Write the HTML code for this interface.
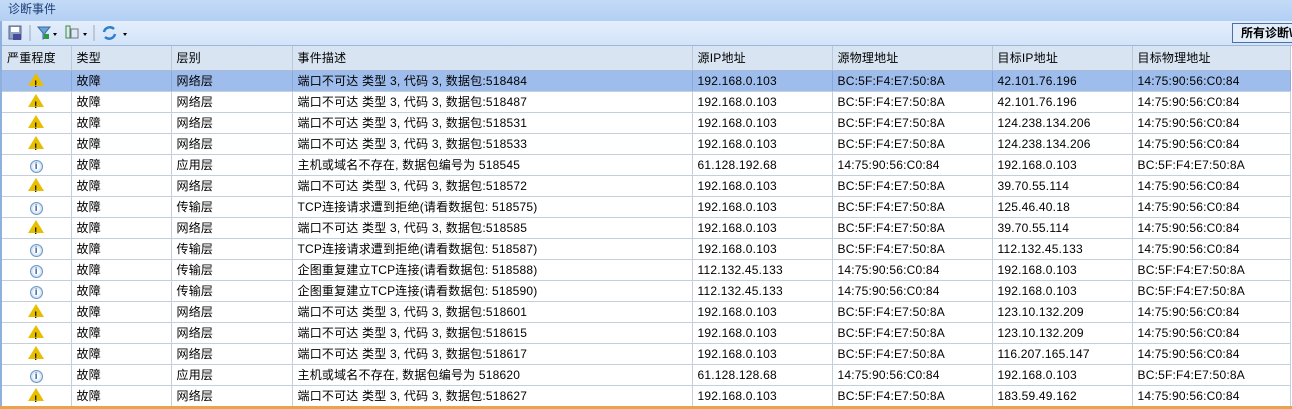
<!DOCTYPE html><html><head><meta charset="utf-8"><style>
body{margin:0;width:1292px;height:409px;overflow:hidden;background:#fff;font-family:"Liberation Sans","Noto Sans CJK SC",sans-serif;font-size:12px;color:#000;position:relative}
.title{position:absolute;left:0;top:0;width:1292px;height:21px;background:linear-gradient(#c4dbf7,#b2cff4);color:#1e3f78;line-height:18px;padding-left:8px;box-sizing:border-box;font-size:12px}
.tb{position:absolute;left:0;top:21px;width:1292px;height:25px;background:linear-gradient(#e4eefb,#d3e3f8);border-bottom:1px solid #9ab7de;box-sizing:border-box}
.btn{position:absolute;left:1232px;top:23px;width:70px;height:20px;border:1px solid #4b6fa8;background:#e3edf9;font-weight:bold;line-height:19px;padding-left:8px;box-sizing:border-box;white-space:nowrap;overflow:hidden}
table{position:absolute;left:2px;top:46px;border-collapse:collapse;table-layout:fixed}
td,th{box-sizing:border-box;height:21px;line-height:19px;border-right:1px solid #c5cfdc;border-bottom:1px solid #c5cfdc;padding:1px 0 0 5px;white-space:nowrap;overflow:hidden;font-weight:normal;text-align:left;letter-spacing:0.2px}
th{height:24px;line-height:22px;background:#d8e4f2;border-right:1px solid #b9c8db;border-bottom:1px solid #a8bcd6}
tr.sel td{background:#9ebdec;border-right-color:#86a8dc}
td.i{text-align:center;padding:0}
.w{display:inline-block;width:0;height:0;border-left:8px solid transparent;border-right:8px solid transparent;border-bottom:13px solid #e8bf00;position:relative;vertical-align:-2px}
.w:after{content:"!";position:absolute;left:-2px;top:2px;font-size:9px;font-weight:bold;color:#000}
.n{display:inline-block;width:11px;height:11px;border-radius:50%;background:radial-gradient(#fff 30%,#9cc4e8);border:1px solid #6d96c4;position:relative;vertical-align:-1px;font-size:9px;line-height:11px;color:#1a4d94;font-weight:bold}
.left{position:absolute;left:0;top:21px;width:2px;height:388px;background:#8fb0dc}
.bot{position:absolute;left:0;top:406px;width:1292px;height:3px;background:#e9a34c}
</style></head><body>
<div class="title">诊断事件</div>
<div class="tb">
<svg width="240" height="24" style="position:absolute;left:0;top:0">
<rect x="9" y="5" width="12" height="13" fill="#8fa3c4" stroke="#55648a"/><rect x="11" y="6" width="8" height="5" fill="#fff"/><rect x="13" y="13" width="8" height="6" fill="#4a4a9a"/>
<line x1="30" y1="4" x2="30" y2="20" stroke="#9ab"/>
<path d="M38 6h12l-5 6v5l-2 1v-6z" fill="#6aa3d6" stroke="#3a6aa0"/><rect x="44" y="13" width="5" height="5" fill="#2d9a3c"/><path d="M53 12h4l-2 3z" fill="#000"/>
<rect x="66" y="5" width="4" height="12" fill="none" stroke="#3a8a3a"/><rect x="71" y="8" width="7" height="9" fill="none" stroke="#777"/><path d="M83 12h4l-2 3z" fill="#000"/>
<line x1="94" y1="4" x2="94" y2="20" stroke="#9ab"/>
<path d="M104 11a6 6 0 0 1 10-3M115 13a6 6 0 0 1-10 3" fill="none" stroke="#2d7fd0" stroke-width="2.5"/><path d="M123 12h4l-2 3z" fill="#000"/>
</svg></div>
<div class="btn">所有诊断\</div>
<div class="left"></div>
<table>
<colgroup><col style="width:69px"><col style="width:100px"><col style="width:121px"><col style="width:400px"><col style="width:140px"><col style="width:160px"><col style="width:140px"><col style="width:158px"></colgroup>
<tr><th>严重程度</th><th>类型</th><th>层别</th><th>事件描述</th><th>源IP地址</th><th>源物理地址</th><th>目标IP地址</th><th>目标物理地址</th></tr>
<tr class="sel"><td class="i"><span class="w"></span></td><td>故障</td><td>网络层</td><td>端口不可达 类型 3, 代码 3, 数据包:518484</td><td>192.168.0.103</td><td>BC:5F:F4:E7:50:8A</td><td>42.101.76.196</td><td>14:75:90:56:C0:84</td></tr>
<tr><td class="i"><span class="w"></span></td><td>故障</td><td>网络层</td><td>端口不可达 类型 3, 代码 3, 数据包:518487</td><td>192.168.0.103</td><td>BC:5F:F4:E7:50:8A</td><td>42.101.76.196</td><td>14:75:90:56:C0:84</td></tr>
<tr><td class="i"><span class="w"></span></td><td>故障</td><td>网络层</td><td>端口不可达 类型 3, 代码 3, 数据包:518531</td><td>192.168.0.103</td><td>BC:5F:F4:E7:50:8A</td><td>124.238.134.206</td><td>14:75:90:56:C0:84</td></tr>
<tr><td class="i"><span class="w"></span></td><td>故障</td><td>网络层</td><td>端口不可达 类型 3, 代码 3, 数据包:518533</td><td>192.168.0.103</td><td>BC:5F:F4:E7:50:8A</td><td>124.238.134.206</td><td>14:75:90:56:C0:84</td></tr>
<tr><td class="i"><span class="n">i</span></td><td>故障</td><td>应用层</td><td>主机或域名不存在, 数据包编号为 518545</td><td>61.128.192.68</td><td>14:75:90:56:C0:84</td><td>192.168.0.103</td><td>BC:5F:F4:E7:50:8A</td></tr>
<tr><td class="i"><span class="w"></span></td><td>故障</td><td>网络层</td><td>端口不可达 类型 3, 代码 3, 数据包:518572</td><td>192.168.0.103</td><td>BC:5F:F4:E7:50:8A</td><td>39.70.55.114</td><td>14:75:90:56:C0:84</td></tr>
<tr><td class="i"><span class="n">i</span></td><td>故障</td><td>传输层</td><td>TCP连接请求遭到拒绝(请看数据包: 518575)</td><td>192.168.0.103</td><td>BC:5F:F4:E7:50:8A</td><td>125.46.40.18</td><td>14:75:90:56:C0:84</td></tr>
<tr><td class="i"><span class="w"></span></td><td>故障</td><td>网络层</td><td>端口不可达 类型 3, 代码 3, 数据包:518585</td><td>192.168.0.103</td><td>BC:5F:F4:E7:50:8A</td><td>39.70.55.114</td><td>14:75:90:56:C0:84</td></tr>
<tr><td class="i"><span class="n">i</span></td><td>故障</td><td>传输层</td><td>TCP连接请求遭到拒绝(请看数据包: 518587)</td><td>192.168.0.103</td><td>BC:5F:F4:E7:50:8A</td><td>112.132.45.133</td><td>14:75:90:56:C0:84</td></tr>
<tr><td class="i"><span class="n">i</span></td><td>故障</td><td>传输层</td><td>企图重复建立TCP连接(请看数据包: 518588)</td><td>112.132.45.133</td><td>14:75:90:56:C0:84</td><td>192.168.0.103</td><td>BC:5F:F4:E7:50:8A</td></tr>
<tr><td class="i"><span class="n">i</span></td><td>故障</td><td>传输层</td><td>企图重复建立TCP连接(请看数据包: 518590)</td><td>112.132.45.133</td><td>14:75:90:56:C0:84</td><td>192.168.0.103</td><td>BC:5F:F4:E7:50:8A</td></tr>
<tr><td class="i"><span class="w"></span></td><td>故障</td><td>网络层</td><td>端口不可达 类型 3, 代码 3, 数据包:518601</td><td>192.168.0.103</td><td>BC:5F:F4:E7:50:8A</td><td>123.10.132.209</td><td>14:75:90:56:C0:84</td></tr>
<tr><td class="i"><span class="w"></span></td><td>故障</td><td>网络层</td><td>端口不可达 类型 3, 代码 3, 数据包:518615</td><td>192.168.0.103</td><td>BC:5F:F4:E7:50:8A</td><td>123.10.132.209</td><td>14:75:90:56:C0:84</td></tr>
<tr><td class="i"><span class="w"></span></td><td>故障</td><td>网络层</td><td>端口不可达 类型 3, 代码 3, 数据包:518617</td><td>192.168.0.103</td><td>BC:5F:F4:E7:50:8A</td><td>116.207.165.147</td><td>14:75:90:56:C0:84</td></tr>
<tr><td class="i"><span class="n">i</span></td><td>故障</td><td>应用层</td><td>主机或域名不存在, 数据包编号为 518620</td><td>61.128.128.68</td><td>14:75:90:56:C0:84</td><td>192.168.0.103</td><td>BC:5F:F4:E7:50:8A</td></tr>
<tr><td class="i"><span class="w"></span></td><td>故障</td><td>网络层</td><td>端口不可达 类型 3, 代码 3, 数据包:518627</td><td>192.168.0.103</td><td>BC:5F:F4:E7:50:8A</td><td>183.59.49.162</td><td>14:75:90:56:C0:84</td></tr>
</table>
<div class="bot"></div>
</body></html>
